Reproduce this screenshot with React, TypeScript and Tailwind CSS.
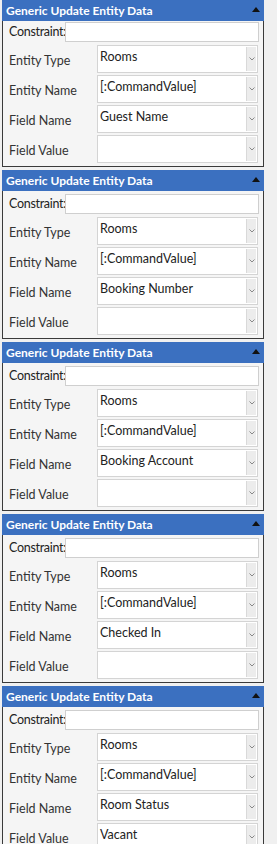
import React from "react";

type Panel = { fieldName: string; fieldValue: string };

const panels: Panel[] = [
  { fieldName: "Guest Name", fieldValue: "" },
  { fieldName: "Booking Number", fieldValue: "" },
  { fieldName: "Booking Account", fieldValue: "" },
  { fieldName: "Checked In", fieldValue: "" },
  { fieldName: "Room Status", fieldValue: "Vacant" },
];

function Select({ value }: { value: string }) {
  return (
    <div className="flex h-[28px] w-[161px] border border-[#d4d4d4] bg-white">
      <div className="flex-1 pl-[2px] pt-[3px] text-[12.5px] leading-[16px] text-[#222]">{value}</div>
      <div className="m-px flex w-[10px] items-center justify-center border-l border-[#d9d9d9] bg-[#ececec]">
        <svg width="6" height="4" viewBox="0 0 6 4">
          <path d="M0.5 0.5 L3 3 L5.5 0.5" fill="none" stroke="#888" strokeWidth="1" />
        </svg>
      </div>
    </div>
  );
}

function Row({ label, value }: { label: string; value: string }) {
  return (
    <div className="flex items-center">
      <div className="w-[94px] pl-[6px] pt-[4px] text-[12.5px] text-[#333]">{label}</div>
      <Select value={value} />
    </div>
  );
}

function PanelView({ p, first }: { p: Panel; first: boolean }) {
  return (
    <div className="w-[262px] shrink-0 border-x border-b border-[#3a3a3a] bg-[#f5f5f5]">
      <div className="-mx-px flex h-[21px] items-center justify-between bg-[#3b70c0] pl-[4px] pr-[4px]">
        <span className="text-[12px] font-bold text-white">Generic Update Entity Data</span>
        <svg width="8" height="5" viewBox="0 0 8 5" className="mb-[2px]">
          <path d="M0 5 L4 0 L8 5 Z" fill="#111" />
        </svg>
      </div>
      <div className={first ? "flex flex-col pb-[3px] pt-px" : "flex flex-col pb-[3px] pt-[3px]"}>
        <div className="flex items-center">
          <div className="w-[62px] shrink-0 whitespace-nowrap pl-[6px] text-[12.5px] tracking-[-0.3px] text-[#222]">Constraint:</div>
          <div className="h-[20px] w-[194px] border border-[#cfcfcf] bg-white" />
        </div>
        <div className="mt-[3px] flex flex-col gap-[2px]">
          <Row label="Entity Type" value="Rooms" />
          <Row label="Entity Name" value="[:CommandValue]" />
          <Row label="Field Name" value={p.fieldName} />
          <Row label="Field Value" value={p.fieldValue} />
        </div>
      </div>
    </div>
  );
}

export default function App() {
  return (
    <div
      className="flex h-[844px] w-[277px] flex-col gap-[3px] overflow-hidden bg-[#f0f0f0] pl-[2px]"
      style={{ fontFamily: 'Lato, "Open Sans", sans-serif' }}
    >
      {panels.map((p, i) => (
        <PanelView key={i} p={p} first={i === 0} />
      ))}
    </div>
  );
}
